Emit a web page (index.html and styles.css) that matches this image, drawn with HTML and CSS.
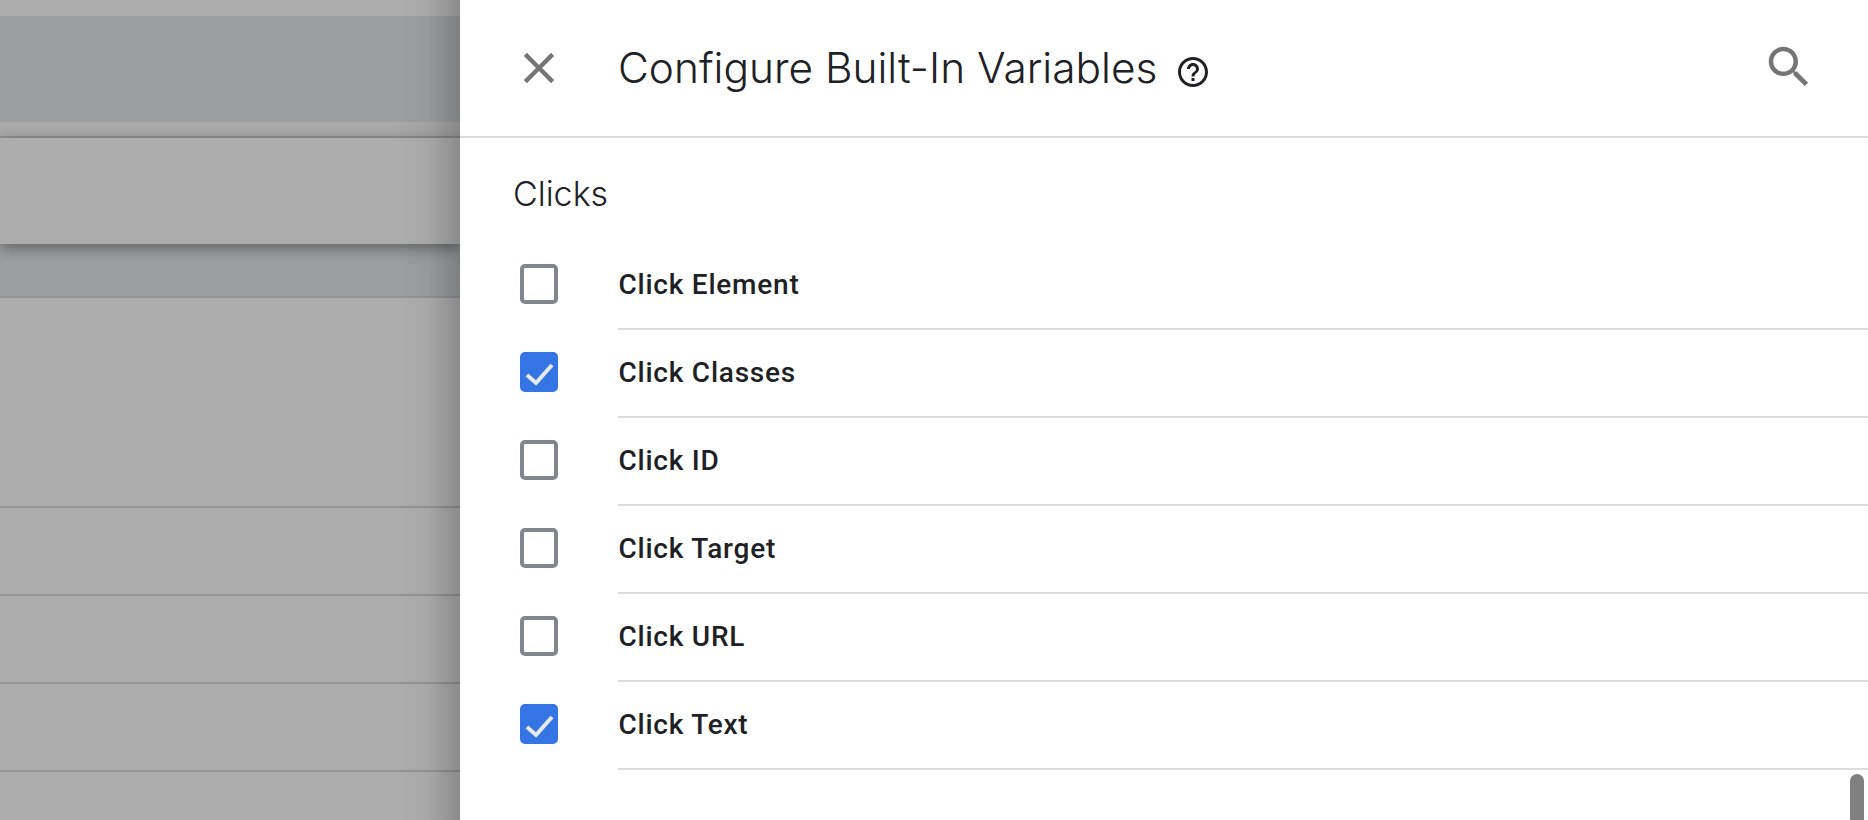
FILE: index.html
```html
<!DOCTYPE html>
<html lang="en">
<head>
<meta charset="utf-8">
<title>Configure Built-In Variables</title>
<link rel="stylesheet" href="styles.css">
</head>
<body>
<div class="app">
  <div class="backdrop">
    <div class="bg-strip"></div>
    <div class="bg-band"></div>
    <div class="bg-row bg-row-a"></div>
    <div class="bg-row bg-row-raised"></div>
    <div class="bg-row bg-row-dark"></div>
    <div class="bg-row bg-row-b"></div>
    <div class="bg-row bg-row-c"></div>
    <div class="bg-row bg-row-c"></div>
    <div class="bg-row bg-row-c"></div>
    <div class="bg-row bg-row-end"></div>
  </div>
  <main class="panel">
    <header class="panel-header">
      <svg class="icon icon-close" viewBox="0 0 24 24"><path d="M19 6.41 17.59 5 12 10.59 6.41 5 5 6.41 10.59 12 5 17.59 6.41 19 12 13.41 17.59 19 19 17.59 13.41 12z"/></svg>
      <h1 class="panel-title">Configure Built-In Variables</h1>
      <svg class="icon icon-help" viewBox="0 0 24 24"><path d="M11 18h2v-2h-2v2zm1-16C6.48 2 2 6.48 2 12s4.48 10 10 10 10-4.48 10-10S17.52 2 12 2zm0 18c-4.41 0-8-3.59-8-8s3.59-8 8-8 8 3.59 8 8-3.59 8-8 8zm0-14c-2.21 0-4 1.79-4 4h2c0-1.1.9-2 2-2s2 .9 2 2c0 2-3 1.75-3 5h2c0-2.25 3-2.5 3-5 0-2.21-1.79-4-4-4z"/></svg>
      <svg class="icon icon-search" viewBox="0 0 24 24"><path d="M15.5 14h-.79l-.28-.27C15.41 12.59 16 11.11 16 9.5 16 5.91 13.09 3 9.5 3S3 5.91 3 9.5 5.91 16 9.5 16c1.61 0 3.09-.59 4.23-1.57l.27.28v.79l5 4.99L20.49 19l-4.99-5zm-6 0C7.01 14 5 11.99 5 9.5S7.01 5 9.5 5 14 7.01 14 9.5 11.99 14 9.5 14z"/></svg>
    </header>
    <section class="group">
      <h2 class="group-title">Clicks</h2>
      <ul class="var-list">
        <li class="var-row"><span class="check"></span><span class="var-label">Click Element</span></li>
        <li class="var-row"><span class="check check-on"><svg class="tick" viewBox="0 0 38 40"><path d="M7 23l9 8L32 13"/></svg></span><span class="var-label">Click Classes</span></li>
        <li class="var-row"><span class="check"></span><span class="var-label">Click ID</span></li>
        <li class="var-row"><span class="check"></span><span class="var-label">Click Target</span></li>
        <li class="var-row"><span class="check"></span><span class="var-label">Click URL</span></li>
        <li class="var-row"><span class="check check-on"><svg class="tick" viewBox="0 0 38 40"><path d="M7 23l9 8L32 13"/></svg></span><span class="var-label">Click Text</span></li>
      </ul>
    </section>
    <div class="scroll-thumb"></div>
  </main>
</div>
</body>
</html>
```
FILE: styles.css
```css
* { box-sizing: border-box; }
html, body { margin: 0; height: 100%; overflow: hidden; background: #fff; }
body { font-family: "Roboto", "Liberation Sans", sans-serif; color: #202124; }
.app { display: flex; height: 820px; width: 1868px; overflow: hidden; }

.backdrop { position: relative; width: 460px; flex: none; display: flex; flex-direction: column; background: #adadad; overflow: hidden; }
.backdrop::after { content: ""; position: absolute; top: 0; bottom: 0; right: 0; width: 64px; background: linear-gradient(to right, rgba(0,0,0,0), rgba(0,0,0,0.04) 50%, rgba(0,0,0,0.2)); z-index: 2; }
.bg-strip { height: 16px; background: #adadad; flex: none; }
.bg-band { height: 106px; background: #9d9ea0; flex: none; }
.bg-row { flex: none; border-bottom: 2px solid #939297; }
.bg-row-a { height: 16px; background: #a9a9a9; }
.bg-row-raised { height: 106px; background: #adadad; border-bottom: 0; box-shadow: 0 4px 14px rgba(0,0,0,0.4); position: relative; z-index: 1; }
.bg-row-dark { height: 54px; background: #9d9ea0; }
.bg-row-b { height: 210px; }
.bg-row-c { height: 88px; }
.bg-row-end { height: 48px; border-bottom: 0; }

.panel { position: relative; flex: 1; min-width: 0; background: #fff; }
.panel-header { height: 138px; border-bottom: 2px solid #dadce0; display: flex; align-items: center; padding: 0 52px 0 53px; }
.icon { flex: none; display: block; }
.icon-close { width: 52px; height: 52px; fill: #757575; margin-top: -1px; }
.icon-help { width: 36px; height: 36px; fill: #202124; margin-left: 18px; margin-top: 7px; }
.icon-search { width: 54px; height: 54px; fill: #757575; margin-left: auto; margin-top: -3px; }
.panel-title { margin: 0 0 0 53px; font-family: "Inter", sans-serif; font-weight: 300; font-size: 42.4px; line-height: 52px; color: #202124; white-space: nowrap; }

.group { padding-top: 36px; }
.group-title { margin: 0 0 0 53px; font-family: "Inter", sans-serif; font-weight: 300; font-size: 34px; line-height: 40px; color: #202124; }
.var-list { list-style: none; margin: 28px 0 0; padding: 0; }
.var-row { display: flex; height: 88px; padding-left: 60px; }
.check { flex: none; width: 38px; height: 40px; margin-top: 22px; border: 4px solid #80868b; border-radius: 5px; background: #fff; }
.check-on { border: 0; background: #3574e3; }
.tick { display: block; width: 38px; height: 40px; fill: none; stroke: #e8eaed; stroke-width: 4; }
.var-label { flex: 1; margin-left: 60px; border-bottom: 2px solid #dadce0; display: flex; align-items: center; font-size: 28px; font-weight: 500; letter-spacing: 0.77px; text-indent: 0.5px; padding-bottom: 1px; color: #202124; }

.scroll-thumb { position: absolute; left: 1390px; top: 774px; width: 14px; height: 60px; border-radius: 7px 7px 0 0; background: #808080; }
```
